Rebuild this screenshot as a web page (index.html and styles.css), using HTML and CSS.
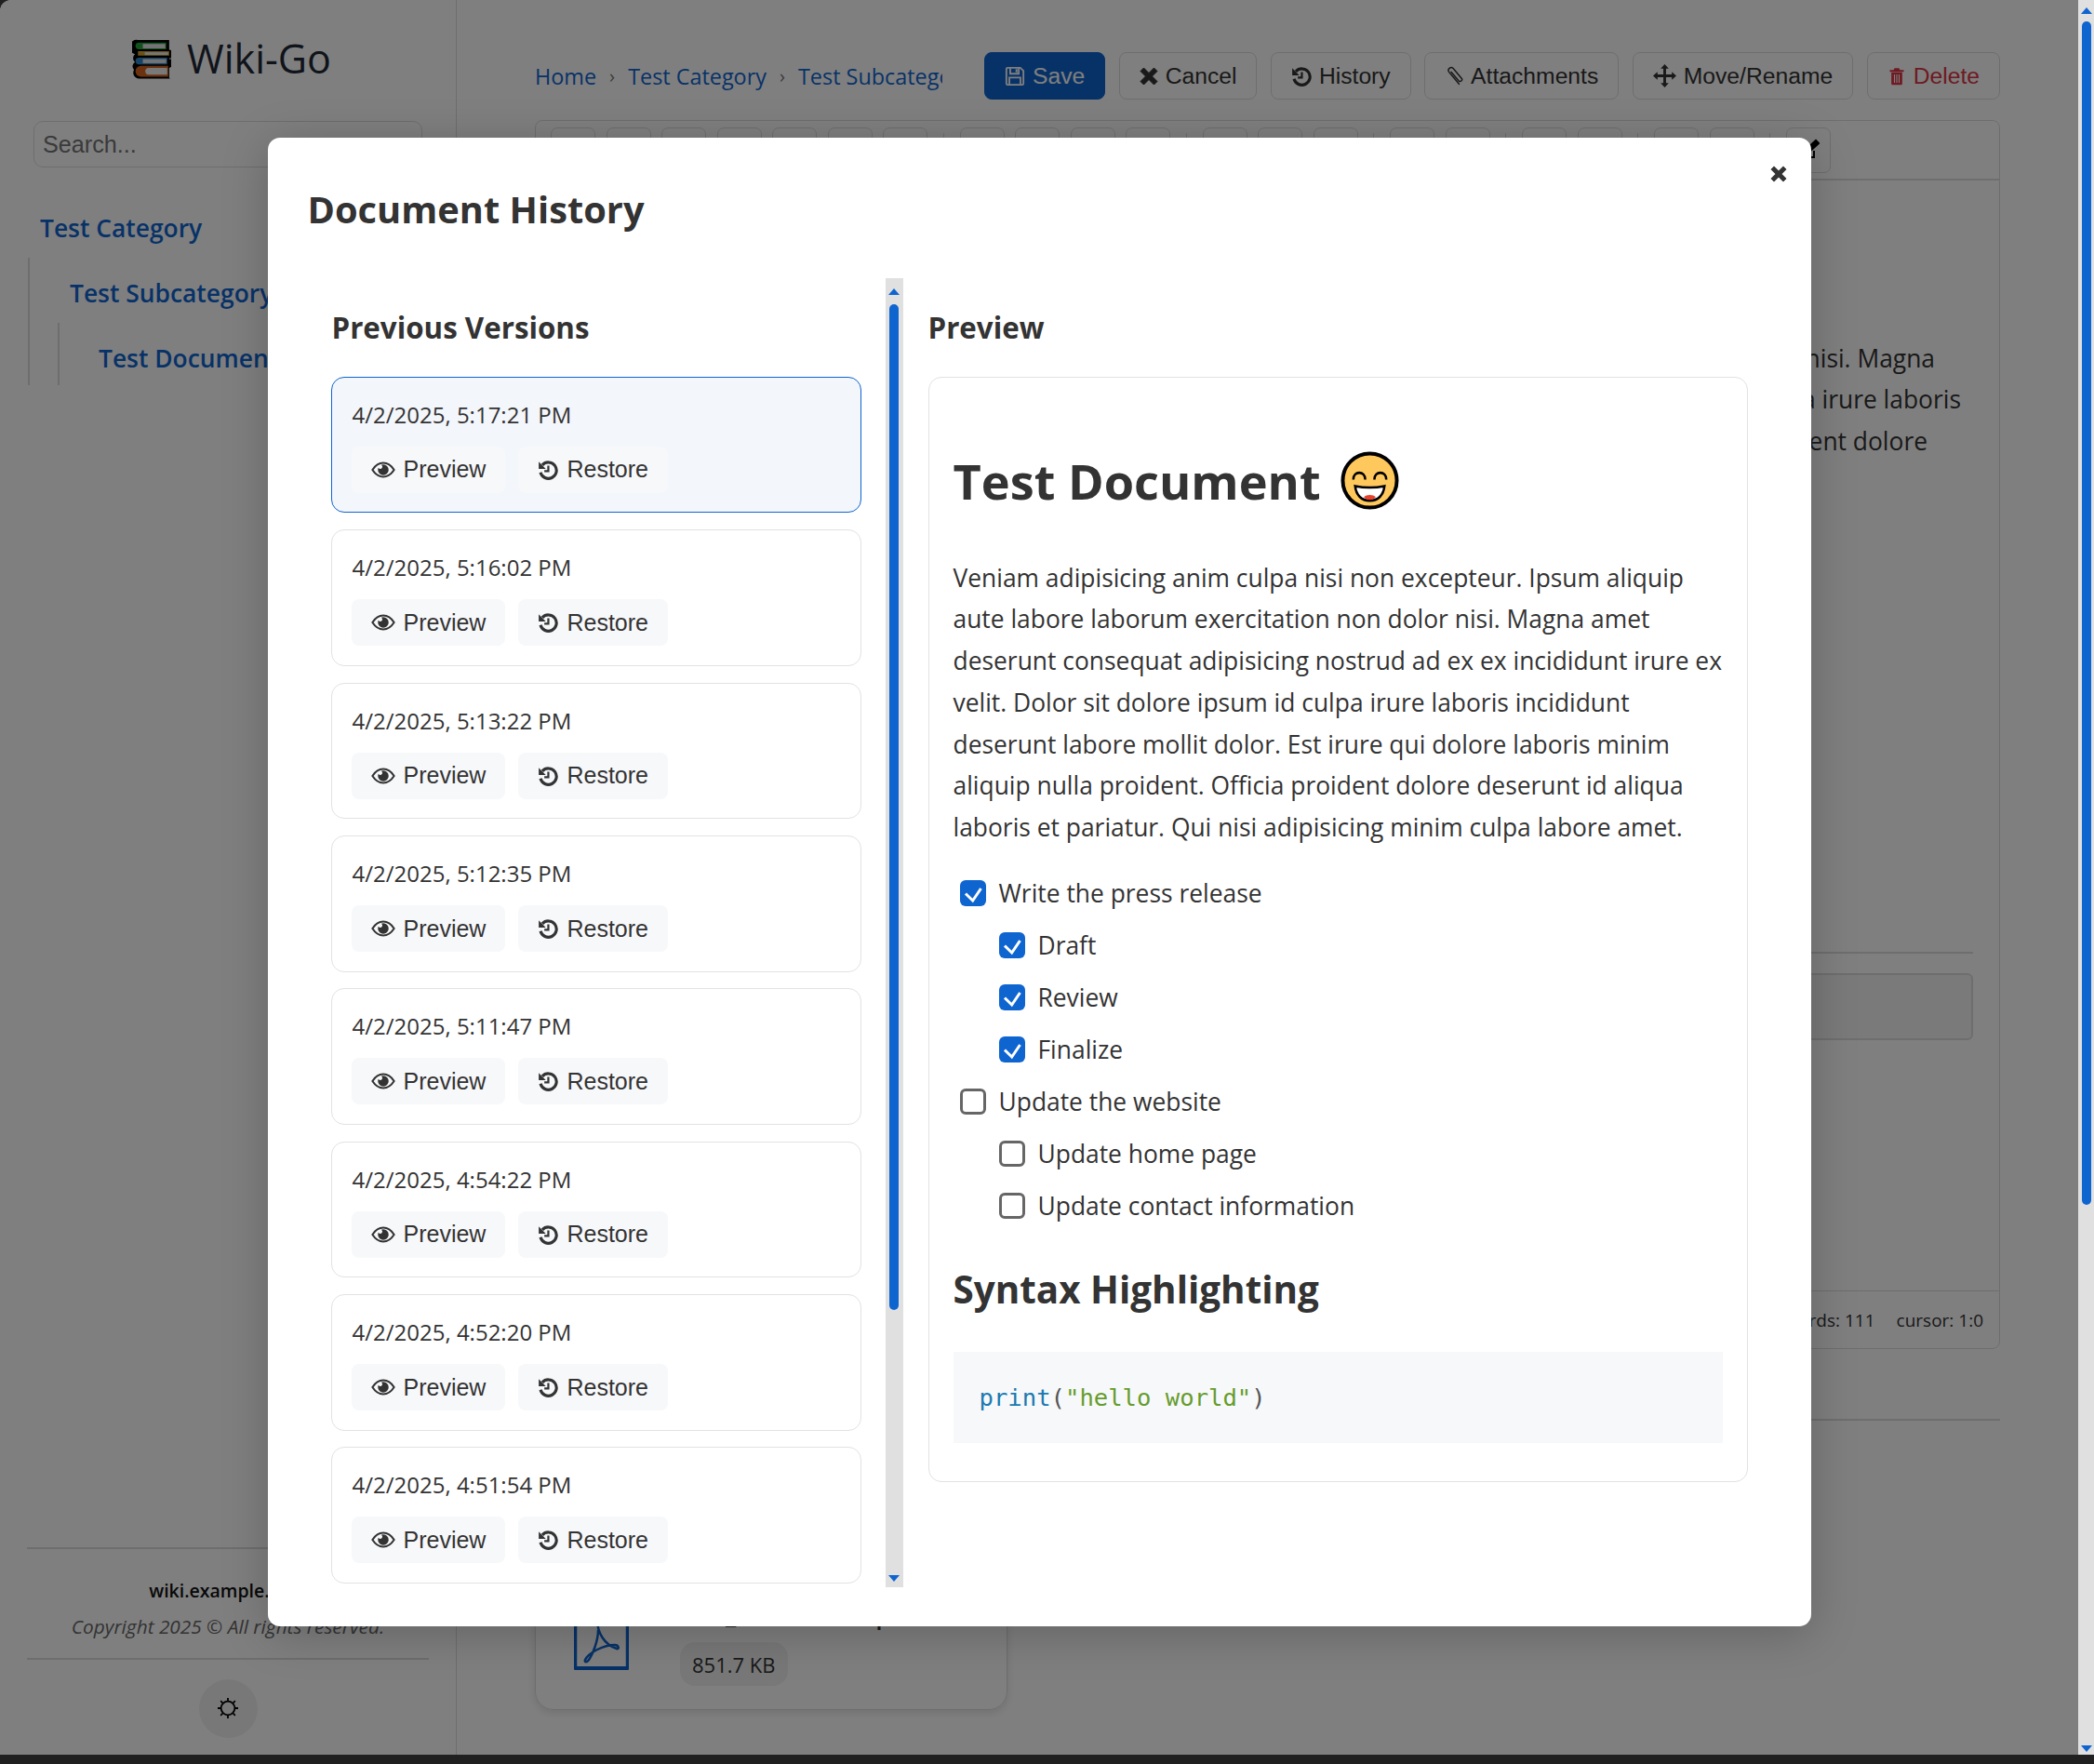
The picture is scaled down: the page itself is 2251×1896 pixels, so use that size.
FILE: index.html
```html
<!DOCTYPE html>
<html lang="en">
<head>
    <meta charset="utf-8">
    <title>Wiki-Go</title>
    <link rel="stylesheet" href="styles.css">
</head>
<body>
    <svg class="icon-defs" aria-hidden="true">
        <symbol id="i-eye" viewBox="0 0 28 20">
            <path d="M1.5 10C5 4.5 9 2 14 2s9 2.5 12.5 8C23 15.5 19 18 14 18S5 15.5 1.5 10z" fill="none" stroke="currentColor" stroke-width="2.2"/>
            <path d="M14 3.8a6.2 6.2 0 1 1-6.2 6.2c0-.9.2-1.8.6-2.5a2.4 2.4 0 1 0 3.2-3.2c.7-.3 1.5-.5 2.4-.5z" fill="currentColor"/>
        </symbol>
        <symbol id="i-history" viewBox="0 0 24 24">
            <path d="M5.4 6.4A9.5 9.5 0 1 1 3.3 15" fill="none" stroke="currentColor" stroke-width="3.4"/>
            <path d="M1.2 2.5v8.3h8.3z" fill="currentColor"/>
            <path d="M12.5 7v6.4H7.8" fill="none" stroke="currentColor" stroke-width="2.4"/>
        </symbol>
        <symbol id="i-save" viewBox="0 0 24 24">
            <path d="M2 3.5A1.5 1.5 0 0 1 3.5 2h14.8L22 5.7v14.8a1.5 1.5 0 0 1-1.5 1.5h-17A1.5 1.5 0 0 1 2 20.5z" fill="none" stroke="currentColor" stroke-width="2"/>
            <path d="M6.5 2.5v6.5h10V2.5M5.5 21.5V13.5h13v8" fill="none" stroke="currentColor" stroke-width="2"/>
            <rect x="12.8" y="3.6" width="2.2" height="3.8" fill="currentColor"/>
        </symbol>
        <symbol id="i-times" viewBox="0 0 20 20">
            <path d="M4.5 1 10 6.5 15.5 1 19 4.5 13.5 10 19 15.5 15.5 19 10 13.5 4.5 19 1 15.5 6.5 10 1 4.5z" fill="currentColor" stroke="currentColor" stroke-linejoin="round"/>
        </symbol>
        <symbol id="i-clip" viewBox="0 0 24 26">
            <path d="M18.5 23 5.5 7.5a3.6 3.6 0 0 1 5.5-4.6l11 13a2.4 2.4 0 0 1-3.7 3L8.5 7.5" fill="none" stroke="currentColor" stroke-width="1.8" stroke-linecap="round"/>
        </symbol>
        <symbol id="i-move" viewBox="0 0 26 26">
            <path d="M13 0l4.5 5h-3v6.5H21v-3l5 4.5-5 4.5v-3h-6.5V21h3L13 26l-4.5-5h3v-6.5H5v3L0 13l5-4.5v3h6.5V5h-3z" fill="currentColor"/>
        </symbol>
        <symbol id="i-trash" viewBox="0 0 20 24">
            <path d="M7 1.5h6l1 2.5h5v2.2H1V4h5z" fill="currentColor"/>
            <path d="M3 7h14v14.5a1.5 1.5 0 0 1-1.5 1.5h-11A1.5 1.5 0 0 1 3 21.5z" fill="currentColor"/>
            <path d="M7 9.5v11M10 9.5v11M13 9.5v11" stroke="#fff" stroke-width="1.3"/>
        </symbol>
        <symbol id="i-check" viewBox="0 0 28 28">
            <path d="M6 14.5l7.7 7.5L22.5 9" fill="none" stroke="#fff" stroke-width="3"/>
        </symbol>
    </svg>

    <div class="window">
        <div class="page">
            <aside class="sidebar">
                <div class="brand">
                    <svg class="brand-logo" viewBox="0 0 41 41">
                        <path d="M6 1h32v10l2 .5v8h-2v1h2v8l-2 1v10l1 1H7a6 6 0 0 1-5-9 5 5 0 0 1 1-8 5 5 0 0 1 0-8A6 6 0 0 1 6 1z" fill="#000"/>
                        <path d="M7 3.5h28v7H7a3.5 3.5 0 0 1 0-7z" fill="#27a33a"/>
                        <rect x="11" y="5" width="23" height="4.5" fill="#e8e8e8"/>
                        <path d="M6 12.5h32v4.5H6z" fill="#dba32d"/>
                        <rect x="13" y="13.5" width="24" height="2.8" fill="#eee"/>
                        <path d="M7 19h29v7H7a3.5 3.5 0 0 1 0-7z" fill="#2e86c9"/>
                        <rect x="11" y="20.5" width="24" height="4.2" fill="#e8e8e8"/>
                        <path d="M9 27.5h28v11H9a5.5 5.5 0 0 1 0-11z" fill="#d9621f"/>
                        <path d="M17 29.5h19v7H17a3.5 3.5 0 0 1 0-7z" fill="#f2f2f2"/>
                    </svg>
                    <span class="brand-name">Wiki-Go</span>
                </div>
                <input class="search" type="text" placeholder="Search...">
                <nav class="tree">
                    <a class="tree-item">Test Category</a>
                    <div class="tree-children">
                        <a class="tree-item">Test Subcategory</a>
                        <div class="tree-children">
                            <a class="tree-item">Test Document</a>
                        </div>
                    </div>
                </nav>
                <footer class="sidebar-footer">
                    <div class="footer-site">wiki.example.com</div>
                    <div class="footer-copy">Copyright 2025 © All rights reserved.</div>
                    <div class="footer-theme">
                        <button class="theme-toggle">
                            <svg width="24" height="24" viewBox="0 0 24 24" fill="none" stroke="#000" stroke-width="1.8">
                                <circle cx="12" cy="12" r="7.4"/>
                                <path d="M12 1v3M12 20v3M1 12h3M20 12h3M4.2 4.2l2.1 2.1M17.7 17.7l2.1 2.1M4.2 19.8l2.1-2.1M17.7 6.3l2.1-2.1"/>
                            </svg>
                        </button>
                    </div>
                </footer>
            </aside>

            <main class="main">
                <div class="topbar">
                    <div class="breadcrumb">
                        <a>Home</a><span class="crumb-sep">›</span>
                        <a>Test Category</a><span class="crumb-sep">›</span>
                        <a>Test Subcategory</a>
                    </div>
                    <div class="actions">
                        <button class="btn btn--primary"><svg class="icon"><use href="#i-save"/></svg>Save</button>
                        <button class="btn"><svg class="icon icon--sm"><use href="#i-times"/></svg>Cancel</button>
                        <button class="btn"><svg class="icon"><use href="#i-history"/></svg>History</button>
                        <button class="btn"><svg class="icon icon--clip"><use href="#i-clip"/></svg>Attachments</button>
                        <button class="btn"><svg class="icon icon--move"><use href="#i-move"/></svg>Move/Rename</button>
                        <button class="btn btn--danger"><svg class="icon icon--sm"><use href="#i-trash"/></svg>Delete</button>
                    </div>
                </div>

                <section class="editor">
                    <div class="toolbar">
                        <i class="tool"></i><i class="tool"></i><i class="tool"></i><i class="tool"></i><i class="tool"></i><i class="tool"></i><i class="tool"></i>
                        <i class="tool-sep"></i>
                        <i class="tool"></i><i class="tool"></i><i class="tool"></i><i class="tool"></i>
                        <i class="tool-sep"></i>
                        <i class="tool"></i><i class="tool"></i><i class="tool"></i>
                        <i class="tool-sep"></i>
                        <i class="tool"></i><i class="tool"></i>
                        <i class="tool-sep"></i>
                        <i class="tool"></i><i class="tool"></i>
                        <i class="tool-sep"></i>
                        <i class="tool"></i><i class="tool"></i>
                        <i class="tool-sep"></i>
                        <i class="tool">
                            <svg width="24" height="24" viewBox="0 0 24 24" fill="none" stroke="#000" stroke-width="2">
                                <path d="M10 4H4v16h14v-7"/>
                                <path d="M9 15l1-4L20 2l3 3-10 9z" fill="#000"/>
                            </svg>
                        </i>
                    </div>
                    <div class="editor-body">
                        <p class="editor-text">
                            <span class="editor-text-first">Veniam adipisicing anim culpa nisi non excepteur. Ipsum aliquip aute labore laborum exercitation non dolor nisi. Magna</span>
                            <span>amet deserunt consequat adipisicing nostrud ad ex ex incididunt irure ex velit. Dolor sit dolore ipsum id culpa irure laboris</span>
                            <span class="editor-text-last">incididunt deserunt labore mollit dolor. Est irure qui dolore laboris minim aliquip nulla proident dolore</span>
                        </p>
                        <hr class="editor-rule">
                        <div class="editor-box"></div>
                    </div>
                    <div class="statusbar"><span>words: 111</span><span>cursor: 1:0</span></div>
                </section>

                <hr class="main-rule">

                <div class="attachment">
                    <svg class="attachment-icon" viewBox="0 0 59 84">
                        <path d="M1.5 3h56v79h-56z" fill="none" stroke="#0f65d0" stroke-width="3.5"/>
                        <path d="M1 80h57v4H1z" fill="#0f65d0"/>
                        <path d="M25 30c0 14 8 27 21 31 3 1 2-4-2-4-12 0-28 8-32 16-1 3 2 3 4 0 4-6 10-20 10-32" fill="none" stroke="#0f65d0" stroke-width="2.5"/>
                    </svg>
                    <div class="attachment-info">
                        <div class="attachment-name">test_documents.pdf</div>
                        <span class="attachment-size">851.7 KB</span>
                    </div>
                </div>
            </main>

            <div class="overlay">
                <div class="modal">
                    <button class="modal-close"><svg width="18" height="18"><use href="#i-times"/></svg></button>
                    <h2 class="modal-title">Document History</h2>
                    <div class="history">
                        <div class="versions">
                            <div class="versions-list">
                                <h3 class="column-title">Previous Versions</h3>
                                <div class="version version--active">
                                    <div class="version-date">4/2/2025, 5:17:21 PM</div>
                                    <div class="version-actions">
                                        <button class="soft-btn"><svg class="icon icon--eye"><use href="#i-eye"/></svg>Preview</button>
                                        <button class="soft-btn"><svg class="icon"><use href="#i-history"/></svg>Restore</button>
                                    </div>
                                </div>
                                <div class="version">
                                    <div class="version-date">4/2/2025, 5:16:02 PM</div>
                                    <div class="version-actions">
                                        <button class="soft-btn"><svg class="icon icon--eye"><use href="#i-eye"/></svg>Preview</button>
                                        <button class="soft-btn"><svg class="icon"><use href="#i-history"/></svg>Restore</button>
                                    </div>
                                </div>
                                <div class="version">
                                    <div class="version-date">4/2/2025, 5:13:22 PM</div>
                                    <div class="version-actions">
                                        <button class="soft-btn"><svg class="icon icon--eye"><use href="#i-eye"/></svg>Preview</button>
                                        <button class="soft-btn"><svg class="icon"><use href="#i-history"/></svg>Restore</button>
                                    </div>
                                </div>
                                <div class="version">
                                    <div class="version-date">4/2/2025, 5:12:35 PM</div>
                                    <div class="version-actions">
                                        <button class="soft-btn"><svg class="icon icon--eye"><use href="#i-eye"/></svg>Preview</button>
                                        <button class="soft-btn"><svg class="icon"><use href="#i-history"/></svg>Restore</button>
                                    </div>
                                </div>
                                <div class="version">
                                    <div class="version-date">4/2/2025, 5:11:47 PM</div>
                                    <div class="version-actions">
                                        <button class="soft-btn"><svg class="icon icon--eye"><use href="#i-eye"/></svg>Preview</button>
                                        <button class="soft-btn"><svg class="icon"><use href="#i-history"/></svg>Restore</button>
                                    </div>
                                </div>
                                <div class="version">
                                    <div class="version-date">4/2/2025, 4:54:22 PM</div>
                                    <div class="version-actions">
                                        <button class="soft-btn"><svg class="icon icon--eye"><use href="#i-eye"/></svg>Preview</button>
                                        <button class="soft-btn"><svg class="icon"><use href="#i-history"/></svg>Restore</button>
                                    </div>
                                </div>
                                <div class="version">
                                    <div class="version-date">4/2/2025, 4:52:20 PM</div>
                                    <div class="version-actions">
                                        <button class="soft-btn"><svg class="icon icon--eye"><use href="#i-eye"/></svg>Preview</button>
                                        <button class="soft-btn"><svg class="icon"><use href="#i-history"/></svg>Restore</button>
                                    </div>
                                </div>
                                <div class="version">
                                    <div class="version-date">4/2/2025, 4:51:54 PM</div>
                                    <div class="version-actions">
                                        <button class="soft-btn"><svg class="icon icon--eye"><use href="#i-eye"/></svg>Preview</button>
                                        <button class="soft-btn"><svg class="icon"><use href="#i-history"/></svg>Restore</button>
                                    </div>
                                </div>
                            </div>
                            <div class="scrollbar scrollbar--versions">
                                <i class="arrow-up"></i>
                                <i class="thumb"></i>
                                <i class="arrow-down"></i>
                            </div>
                        </div>

                        <div class="preview">
                            <h3 class="column-title">Preview</h3>
                            <article class="doc">
                                <h1 class="doc-title">Test Document
                                    <svg class="emoji" viewBox="0 0 64 64">
                                        <circle cx="32" cy="32" r="29.5" fill="#ffc85c" stroke="#000" stroke-width="4"/>
                                        <path d="M14 31c0-10 13-10 13 0M37 31c0-10 13-10 13 0" fill="none" stroke="#000" stroke-width="2.6"/>
                                        <path d="M16 38c10 2 22 2 32 0-1 10-7 16-16 16s-15-6-16-16z" fill="#fff" stroke="#000" stroke-width="2.6"/>
                                        <path d="M25.5 50c3-3 10-3 13 0-3 4-10 4-13 0z" fill="#e8402a"/>
                                    </svg>
                                </h1>
                                <p class="doc-text">Veniam adipisicing anim culpa nisi non excepteur. Ipsum aliquip aute labore laborum exercitation non dolor nisi. Magna amet deserunt consequat adipisicing nostrud ad ex ex incididunt irure ex velit. Dolor sit dolore ipsum id culpa irure laboris incididunt deserunt labore mollit dolor. Est irure qui dolore laboris minim aliquip nulla proident. Officia proident dolore deserunt id aliqua laboris et pariatur. Qui nisi adipisicing minim culpa labore amet.</p>
                                <ul class="tasks">
                                    <li class="task"><span class="box box--on"><svg><use href="#i-check"/></svg></span>Write the press release</li>
                                    <li class="task task--sub"><span class="box box--on"><svg><use href="#i-check"/></svg></span>Draft</li>
                                    <li class="task task--sub"><span class="box box--on"><svg><use href="#i-check"/></svg></span>Review</li>
                                    <li class="task task--sub"><span class="box box--on"><svg><use href="#i-check"/></svg></span>Finalize</li>
                                    <li class="task"><span class="box"></span>Update the website</li>
                                    <li class="task task--sub"><span class="box"></span>Update home page</li>
                                    <li class="task task--sub"><span class="box"></span>Update contact information</li>
                                </ul>
                                <h2 class="doc-heading">Syntax Highlighting</h2>
                                <pre class="code"><span class="code-fn">print</span>(<span class="code-str">"hello world"</span>)</pre>
                            </article>
                        </div>
                    </div>
                </div>
            </div>
        </div>

        <div class="scrollbar scrollbar--page">
            <i class="arrow-up"></i>
            <i class="thumb"></i>
            <i class="arrow-down"></i>
        </div>
    </div>
    <div class="taskbar"></div>
</body>
</html>
```
FILE: styles.css
```css
* {
    box-sizing: border-box;
}

html,
body {
    margin: 0;
    height: 1896px;
    overflow: hidden;
}

body {
    display: flex;
    flex-direction: column;
    background-color: #202020;
    color: #333;
    font-family: "Open Sans", sans-serif;
    font-size: 26.4px;
}

.icon-defs {
    position: absolute;
    width: 0;
    height: 0;
}

button {
    font-family: "Liberation Sans", sans-serif;
    font-size: 25px;
}

/* window frame */

.window {
    display: flex;
    height: 1886px;
    flex-shrink: 0;
}

.page {
    position: relative;
    flex: 1;
    display: flex;
    overflow: hidden;
    background-color: #fff;
    border-top-left-radius: 12px;
}

.taskbar {
    height: 10px;
    background-color: #202020;
}

.scrollbar {
    display: flex;
    flex-direction: column;
    align-items: center;
    background-color: #e0e0e0;
}

.scrollbar--page {
    width: 17px;
    padding: 8px 0 3px;
}

.scrollbar--page .thumb {
    height: 1272px;
    margin-top: 8px;
}

.scrollbar--versions {
    flex-shrink: 0;
    width: 19px;
    padding: 11px 0 6px;
    margin-left: 26px;
}

.scrollbar--versions .thumb {
    height: 1081px;
    margin-top: 10px;
}

.thumb {
    width: 10px;
    border-radius: 5px;
    background-color: #0f65d0;
}

.arrow-up {
    width: 0;
    height: 0;
    border: 6px solid transparent;
    border-top: 0;
    border-bottom: 7px solid #0f65d0;
}

.arrow-down {
    width: 0;
    height: 0;
    margin-top: auto;
    border: 6px solid transparent;
    border-bottom: 0;
    border-top: 7px solid #0f65d0;
}

/* sidebar */

.sidebar {
    display: flex;
    flex-direction: column;
    flex-shrink: 0;
    width: 491px;
    padding: 0 29px;
    border-right: 1px solid #ddd;
}

.brand {
    display: flex;
    align-items: center;
    justify-content: center;
    gap: 16px;
    height: 43px;
    margin-top: 42px;
    padding-left: 8px;
}

.brand-logo {
    width: 43px;
    height: 43px;
}

.brand-name {
    margin-top: -3px;
    font-size: 43px;
    color: #1f2937;
}

.search {
    width: 418px;
    height: 50px;
    margin: 45px 0 0 7px;
    padding: 0 9px;
    border: 1px solid #ddd;
    border-radius: 10px;
    font-family: "Liberation Sans", sans-serif;
    font-size: 25.2px;
}

.tree {
    margin-top: 33px;
}

.tree-item {
    display: flex;
    align-items: center;
    height: 64px;
    padding-left: 14px;
    color: #0f65d0;
    font-size: 26.4px;
    font-weight: 600;
}

.tree-children {
    margin-left: 1px;
    padding-left: 29px;
    padding-top: 6px;
    border-left: 2px solid #ddd;
}

.tree-children .tree-children {
    padding-left: 28px;
    padding-top: 9px;
}

.tree-children .tree-children .tree-item {
    height: 58px;
}

.sidebar-footer {
    display: flex;
    flex-direction: column;
    margin-top: auto;
    padding-bottom: 18.5px;
    text-align: center;
}

.footer-site {
    padding-top: 31px;
    border-top: 2px solid #ddd;
    color: #111;
    font-size: 19.5px;
    font-weight: 600;
}

.footer-copy {
    margin-top: 10.5px;
    padding-bottom: 20px;
    border-bottom: 2px solid #ddd;
    color: #666;
    font-size: 20.8px;
    font-style: italic;
}

.footer-theme {
    display: flex;
    justify-content: center;
    padding-top: 21px;
}

.theme-toggle {
    display: flex;
    align-items: center;
    justify-content: center;
    width: 63px;
    height: 63px;
    border: 0;
    border-radius: 50%;
    background-color: #f1f1f1;
}

/* main */

.main {
    flex: 1;
    min-width: 0;
    padding: 56px 84px 0;
}

.topbar {
    display: flex;
    align-items: center;
    justify-content: space-between;
}

.breadcrumb {
    display: flex;
    align-items: center;
    gap: 14px;
    width: 438px;
    overflow: hidden;
    white-space: nowrap;
    color: #0f65d0;
    font-size: 23.4px;
}

.crumb-sep {
    color: #777;
    font-size: 20px;
}

.actions {
    display: flex;
    gap: 14.4px;
}

.btn {
    display: flex;
    align-items: center;
    gap: 8px;
    height: 51px;
    padding: 0 21px;
    border: 1px solid #ddd;
    border-radius: 8px;
    background-color: #fff;
    color: #333;
    font-size: 24.7px;
}

.btn--primary {
    border-color: #0f65d0;
    background-color: #0f65d0;
    color: #fff;
}

.btn--danger {
    color: #dc3545;
}

.icon {
    width: 22px;
    height: 24px;
}

.icon--sm {
    width: 20px;
    height: 20px;
}

.icon--clip {
    width: 20px;
}

.icon--move {
    width: 25px;
    height: 25px;
}

.icon--eye {
    width: 26px;
    height: 20px;
}

.editor {
    display: flex;
    flex-direction: column;
    height: 1321px;
    margin-top: 22px;
    border: 1px solid #ddd;
    border-radius: 8px;
}

.toolbar {
    display: flex;
    align-items: center;
    gap: 11.5px;
    height: 64px;
    padding-left: 16px;
    border-bottom: 2px solid #ddd;
}

.tool {
    display: flex;
    align-items: center;
    justify-content: center;
    flex-shrink: 0;
    width: 48px;
    height: 49px;
    border: 1px solid #ddd;
    border-radius: 7px;
}

.tool-sep {
    width: 1px;
    height: 37px;
    margin: 0 5.25px;
    background-color: #ddd;
}

.editor-body {
    flex: 1;
    padding: 168.5px 28px 0;
}

.editor-text {
    display: flex;
    flex-direction: column;
    align-items: flex-end;
    margin: 0;
    padding-right: 13px;
    line-height: 44.8px;
    white-space: nowrap;
}

.editor-text-first {
    margin-right: 28px;
}

.editor-text-last {
    margin-right: 36px;
}

.editor-rule {
    margin: 526.5px 0 0;
    border: 0;
    border-top: 2px solid #ddd;
}

.editor-box {
    height: 72px;
    margin-top: 21px;
    border: 2px solid #ddd;
    border-radius: 6px;
    background-color: #f5f5f5;
}

.statusbar {
    display: flex;
    align-items: center;
    justify-content: flex-end;
    gap: 23px;
    height: 62px;
    padding-right: 17px;
    border-top: 1px solid #ddd;
    font-size: 19px;
}

.main-rule {
    margin: 75px 0 0;
    border: 0;
    border-top: 2px solid #ddd;
}

.attachment {
    display: flex;
    gap: 55px;
    width: 508px;
    height: 220px;
    margin-top: 91px;
    padding: 44px 41px 0;
    border: 1px solid #ddd;
    border-radius: 20px;
    box-shadow: 0 3px 10px rgba(0, 0, 0, 0.12);
}

.attachment-icon {
    width: 59px;
    height: 84px;
    margin-top: 48px;
    flex-shrink: 0;
}

.attachment-info {
    display: flex;
    flex-direction: column;
    align-items: flex-start;
}

.attachment-name {
    margin-top: 54px;
    font-weight: 600;
    line-height: 36px;
    white-space: nowrap;
}

.attachment-size {
    display: flex;
    align-items: center;
    height: 47px;
    margin-top: 12px;
    padding: 0 13px;
    border-radius: 16px;
    background-color: #f1f1f1;
    font-size: 22px;
}

/* history modal */

.overlay {
    position: absolute;
    inset: 0;
    display: flex;
    align-items: flex-start;
    justify-content: center;
    padding-top: 148px;
    background-color: rgba(0, 0, 0, 0.5);
}

.modal {
    position: relative;
    width: 1659px;
    height: 1600px;
    padding: 0 43px;
    border-radius: 13px;
    background-color: #fff;
    box-shadow: 0 8px 50px rgba(0, 0, 0, 0.22);
}

.modal-close {
    position: absolute;
    top: 30px;
    right: 26px;
    display: flex;
    padding: 0;
    border: 0;
    background: none;
    color: #333;
}

.modal-title {
    margin: 0;
    padding-top: 49px;
    font-size: 39.8px;
    line-height: 56px;
    font-weight: 700;
}

.history {
    display: flex;
    height: 1407px;
    margin-top: 46px;
    gap: 27px;
}

.versions {
    display: flex;
    flex-shrink: 0;
    width: 640px;
    overflow: hidden;
}

.versions-list {
    display: flex;
    flex-direction: column;
    gap: 17.85px;
    width: 595px;
    padding-left: 25px;
}

.column-title {
    margin: 31px 0 0;
    font-size: 31.3px;
    line-height: 44px;
    font-weight: 700;
}

.versions-list .column-title {
    margin-bottom: 13.15px;
    margin-left: 1px;
}

.version {
    flex-shrink: 0;
    height: 146.5px;
    padding: 21px 21px 0;
    border: 1px solid #e2e2e2;
    border-radius: 14px;
}

.version--active {
    border-color: #0f65d0;
    background-color: #f3f6fb;
}

.version-date {
    margin-left: 1px;
    font-size: 24px;
    line-height: 38px;
}

.version-actions {
    display: flex;
    gap: 14px;
    margin-top: 15px;
}

.soft-btn {
    display: flex;
    align-items: center;
    gap: 9px;
    height: 50px;
    padding: 0 21px;
    border: 0;
    border-radius: 8px;
    background-color: #f7f8fa;
    color: #333;
}

.preview {
    width: 881px;
}

.doc {
    height: 1188px;
    margin-top: 31px;
    padding: 0 26px;
    border: 1px solid #e2e2e2;
    border-radius: 14px;
}

.preview .column-title {
    margin-bottom: 0;
}

.doc-title {
    display: flex;
    align-items: center;
    gap: 21px;
    margin: 79px 0 0;
    font-size: 52.3px;
    line-height: 62px;
    font-weight: 700;
}

.emoji {
    width: 63px;
    height: 63px;
}

.doc-text {
    margin: 50.5px 0 0;
    line-height: 44.8px;
}

.tasks {
    margin: 20px 0 0;
    padding: 0;
    list-style: none;
}

.task {
    display: flex;
    align-items: center;
    gap: 14px;
    height: 56px;
    padding-left: 7px;
}

.task--sub {
    padding-left: 49px;
}

.box {
    display: flex;
    width: 28px;
    height: 28px;
    border: 3px solid #666;
    border-radius: 6px;
}

.box--on {
    border: 0;
    background-color: #0f65d0;
}

.box svg {
    width: 28px;
    height: 28px;
}

.doc-heading {
    margin: 31.5px 0 0;
    font-size: 40.4px;
    line-height: 60px;
    font-weight: 700;
}

.code {
    height: 98px;
    margin: 37px 0 0;
    padding: 0 28px;
    background-color: #f7f8fa;
    color: #555;
    font-family: "DejaVu Sans Mono", monospace;
    font-size: 25.6px;
    line-height: 98px;
}

.code-fn {
    color: #1a7ab0;
}

.code-str {
    color: #669c2d;
}
```
